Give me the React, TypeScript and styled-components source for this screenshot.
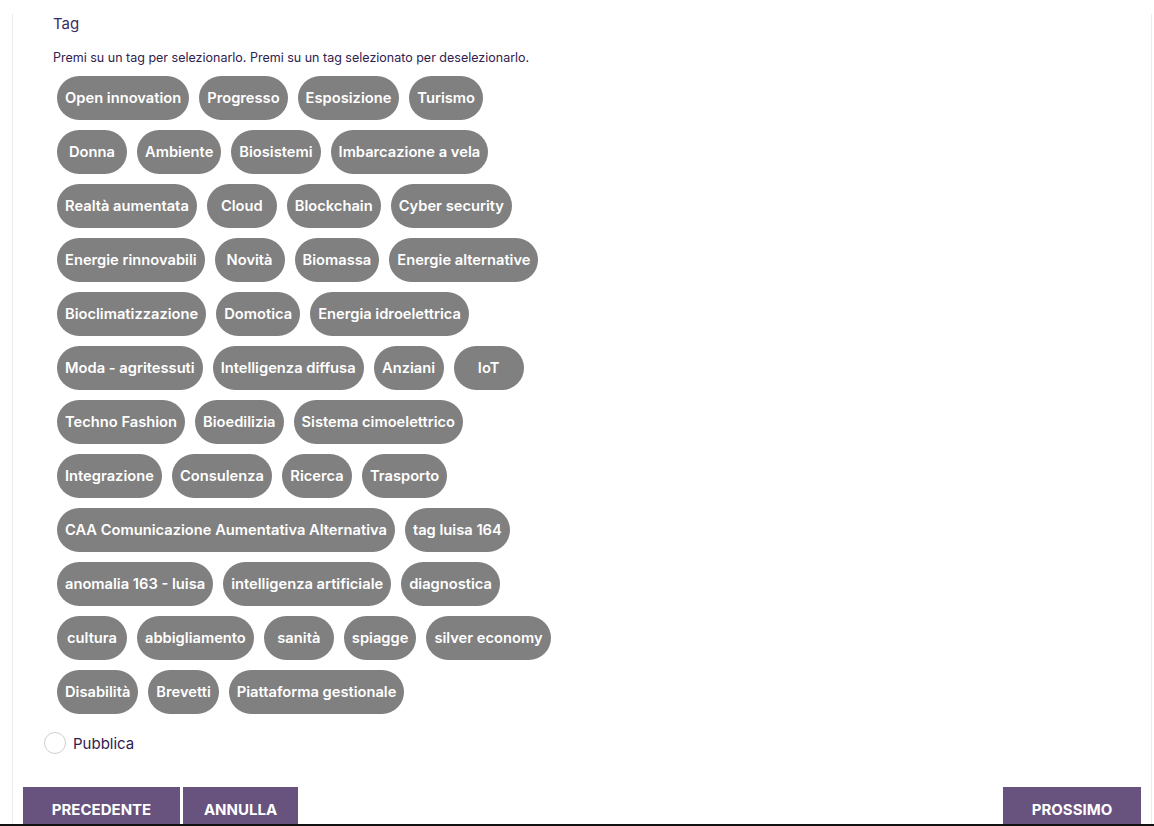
import React from "react";
import styled, { createGlobalStyle } from "styled-components";

const Global = createGlobalStyle`
  html, body { margin: 0; padding: 0; background: #fff; }
  body { font-family: "Inter", "Open Sans", sans-serif; }
  * { box-sizing: border-box; }
`;

const Page = styled.div`
  height: 826px;
  overflow: hidden;
  border-bottom: 2px solid #111;
  padding: 12px 2px 0 12px;
`;

const Panel = styled.div`
  border-left: 1px solid #ececec;
  border-right: 1px solid #ececec;
  min-height: 900px;
  padding: 0 10px;
`;

const Form = styled.div`
  padding-left: 30px;
`;

const Label = styled.div`
  margin-top: 2px;
  font-size: 15px;
  line-height: 20px;
  color: #3b2a5e;
`;

const Hint = styled.div`
  margin-top: 16px;
  font-size: 12.5px;
  line-height: 16px;
  color: #2f2150;
`;

const Tags = styled.div`
  margin-top: 10px;
  padding-left: 4px;
  display: flex;
  flex-direction: column;
  gap: 10px;
`;

const TagRow = styled.div`
  display: flex;
  gap: 10px;
`;

const Pill = styled.button`
  height: 44px;
  min-width: 70px;
  padding: 0 8px;
  border: none;
  border-radius: 22px;
  background: #808080;
  color: #fff;
  font-family: "Inter", sans-serif;
  font-weight: 600;
  font-size: 14.7px;
  letter-spacing: 0;
  white-space: nowrap;
  cursor: pointer;
`;

const RadioRow = styled.label`
  display: flex;
  align-items: center;
  gap: 7px;
  margin: 18px 0 0 -9px;
  font-size: 15px;
  color: #2f2150;
`;

const Circle = styled.span`
  width: 22px;
  height: 22px;
  border-radius: 50%;
  border: 1px solid #cfcfcf;
  background: #fff;
`;

const Actions = styled.div`
  display: flex;
  gap: 3px;
  margin-top: 33px;
`;

const Btn = styled.button<{ $w: number }>`
  width: ${(p) => p.$w}px;
  height: 44px;
  border: none;
  background: #68537f;
  color: #fff;
  font-family: "Inter", sans-serif;
  font-weight: 700;
  font-size: 15px;
  padding: 0;
  text-transform: uppercase;
`;

const Spacer = styled.div`
  flex: 1;
`;

const rows: string[][] = [
  ["Open innovation", "Progresso", "Esposizione", "Turismo"],
  ["Donna", "Ambiente", "Biosistemi", "Imbarcazione a vela"],
  ["Realtà aumentata", "Cloud", "Blockchain", "Cyber security"],
  ["Energie rinnovabili", "Novità", "Biomassa", "Energie alternative"],
  ["Bioclimatizzazione", "Domotica", "Energia idroelettrica"],
  ["Moda - agritessuti", "Intelligenza diffusa", "Anziani", "IoT"],
  ["Techno Fashion", "Bioedilizia", "Sistema cimoelettrico"],
  ["Integrazione", "Consulenza", "Ricerca", "Trasporto"],
  ["CAA Comunicazione Aumentativa Alternativa", "tag luisa 164"],
  ["anomalia 163 - luisa", "intelligenza artificiale", "diagnostica"],
  ["cultura", "abbigliamento", "sanità", "spiagge", "silver economy"],
  ["Disabilità", "Brevetti", "Piattaforma gestionale"],
];

export default function App() {
  return (
    <>
      <Global />
      <Page>
        <Panel>
          <Form>
            <Label>Tag</Label>
            <Hint>
              Premi su un tag per selezionarlo. Premi su un tag selezionato per
              deselezionarlo.
            </Hint>
            <Tags>
              {rows.map((r, i) => (
                <TagRow key={i}>
                  {r.map((t) => (
                    <Pill key={t}>{t}</Pill>
                  ))}
                </TagRow>
              ))}
            </Tags>
            <RadioRow>
              <Circle />
              Pubblica
            </RadioRow>
          </Form>
          <Actions>
            <Btn $w={157}>Precedente</Btn>
            <Btn $w={115}>Annulla</Btn>
            <Spacer />
            <Btn $w={138}>Prossimo</Btn>
          </Actions>
        </Panel>
      </Page>
    </>
  );
}
